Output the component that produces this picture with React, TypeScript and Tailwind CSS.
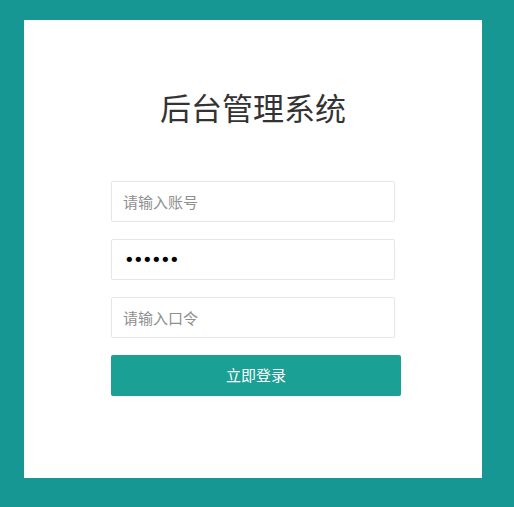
import React from "react";

const font = { fontFamily: '"Noto Sans CJK SC", "Liberation Sans", sans-serif' };

export default function App() {
  return (
    <div className="w-[514px] h-[507px] bg-[#169794] pt-[20px] pl-[24px]" style={font}>
      <div className="w-[458px] h-[458px] bg-white flex flex-col">
        <h1 className="mt-[67px] text-center text-[31px] leading-[40px] text-[#333] font-normal">
          后台管理系统
        </h1>
        <form className="mt-[54px] ml-[87px] flex flex-col" onSubmit={(e) => e.preventDefault()}>
          <input
            type="text"
            placeholder="请输入账号"
            className="w-[284px] h-[41px] border border-[#e6e6e6] rounded-[2px] px-[11px] text-[15px] text-[#333] placeholder:text-[#8f8f8f] outline-none"
          />
          <input
            type="password"
            defaultValue="123456"
            className="mt-[17px] w-[284px] h-[41px] border border-[#e6e6e6] rounded-[2px] px-[12px] text-[18px] text-black outline-none font-['DejaVu_Sans',sans-serif] tracking-[-1.6px]"
          />
          <input
            type="password"
            placeholder="请输入口令"
            className="mt-[17px] w-[284px] h-[41px] border border-[#e6e6e6] rounded-[2px] px-[11px] text-[15px] text-[#333] placeholder:text-[#8f8f8f] outline-none"
          />
          <button
            type="submit"
            className="mt-[17px] w-[290px] h-[41px] bg-[#1aa094] rounded-[2px] text-white text-[15px]"
          >
            立即登录
          </button>
        </form>
      </div>
    </div>
  );
}
